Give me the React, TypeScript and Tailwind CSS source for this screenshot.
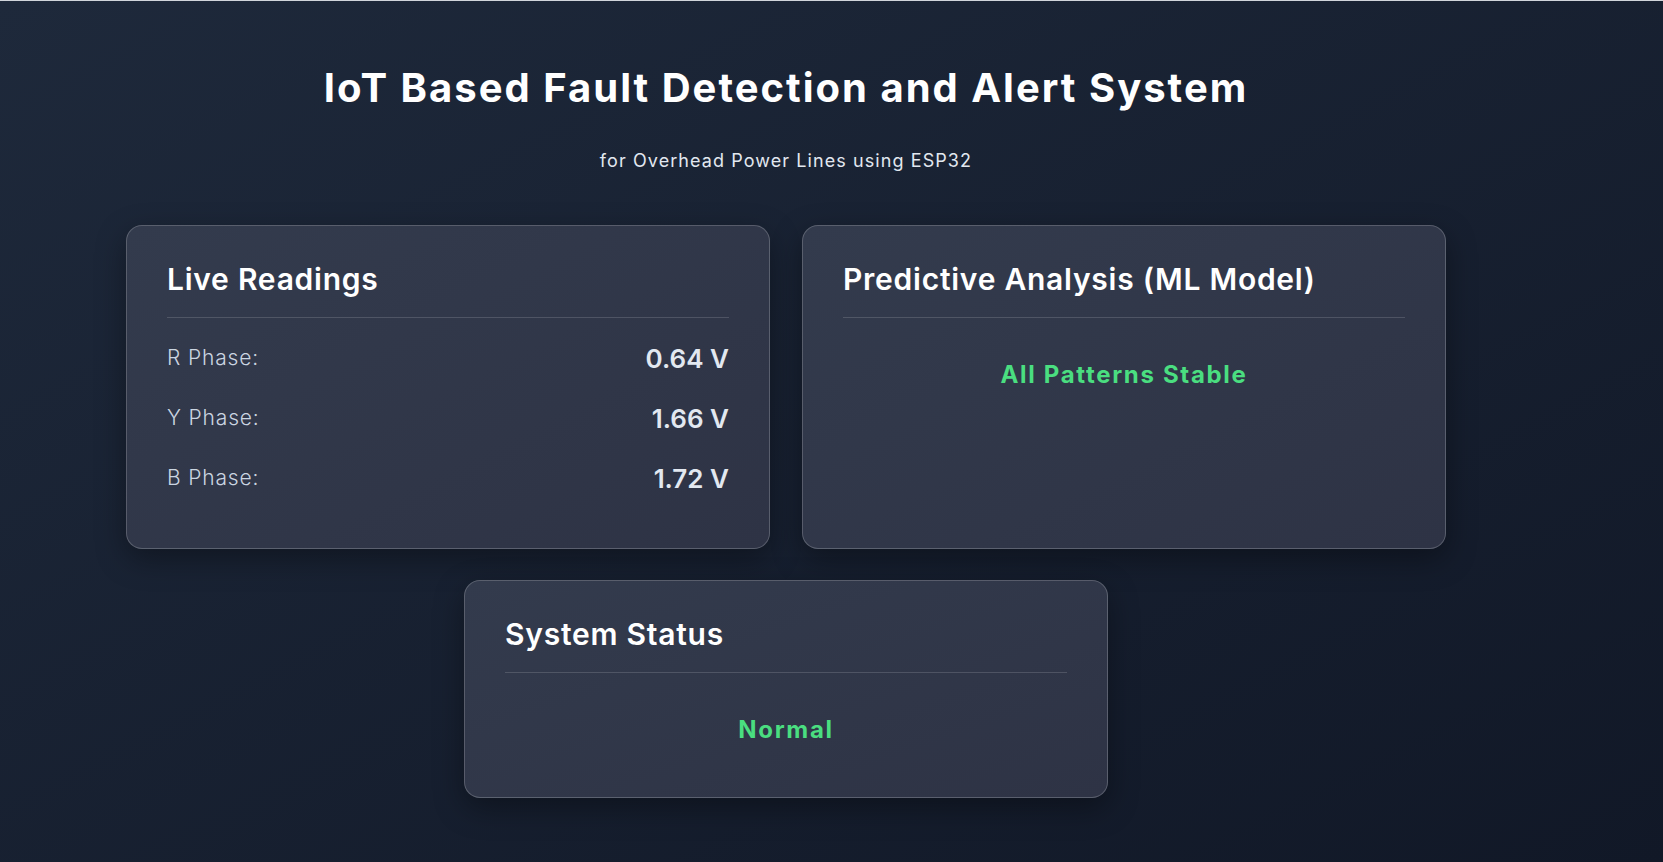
const font = { fontFamily: 'Inter, "Noto Sans", sans-serif' }

const readings = [
  { label: 'R Phase:', value: '0.64 V' },
  { label: 'Y Phase:', value: '1.66 V' },
  { label: 'B Phase:', value: '1.72 V' },
]

function Card({ title, children, className = '' }: { title: string; children: React.ReactNode; className?: string }) {
  return (
    <div
      className={`rounded-2xl border border-white/20 bg-gradient-to-br from-[#333b4d] to-[#2e3345] p-10 shadow-[0_10px_30px_rgba(0,0,0,0.35)] ${className}`}
    >
      <h2 className="border-b border-white/15 pb-[25px] text-[30px] font-semibold leading-[26px] tracking-[0.025em] text-white">
        {title}
      </h2>
      {children}
    </div>
  )
}

function StatusText({ text }: { text: string }) {
  return (
    <p className="pt-[41px] pb-[11px] text-center text-[24px] font-bold leading-8 tracking-[0.07em] text-[#4ade80]">
      {text}
    </p>
  )
}

export default function App() {
  return (
    <div
      className="min-h-screen border-t border-[#d1d5db] bg-gradient-to-br from-[#1e293b] to-[#111827]"
      style={font}
    >
      <div className="ml-[126px] w-[1320px] pt-[63px] pb-16">
        {/* Header */}
        <h1 className="text-center text-[40px] font-bold leading-[48px] tracking-[0.05em] text-white">
          IoT Based Fault Detection and Alert System
        </h1>
        <p className="mt-[35px] text-center text-[18px] leading-7 tracking-[0.06em] text-[#e2e8f0]">
          for Overhead Power Lines using ESP32
        </p>

        {/* Top row */}
        <div className="mt-[50px] grid grid-cols-2 gap-8">
          <Card title="Live Readings">
            <div className="mt-[10px]">
              {readings.map((r) => (
                <div key={r.label} className="flex h-[60px] items-center justify-between">
                  <span className="text-[21px] font-light tracking-[0.04em] text-[#cbd5e1]">{r.label}</span>
                  <span className="text-[26px] font-semibold text-[#e2e8f0]">{r.value}</span>
                </div>
              ))}
            </div>
          </Card>
          <Card title="Predictive Analysis (ML Model)">
            <StatusText text="All Patterns Stable" />
          </Card>
        </div>

        {/* Bottom row */}
        <div className="mt-[31px] flex justify-center">
          <Card title="System Status" className="w-[644px]">
            <StatusText text="Normal" />
          </Card>
        </div>
      </div>
    </div>
  )
}
